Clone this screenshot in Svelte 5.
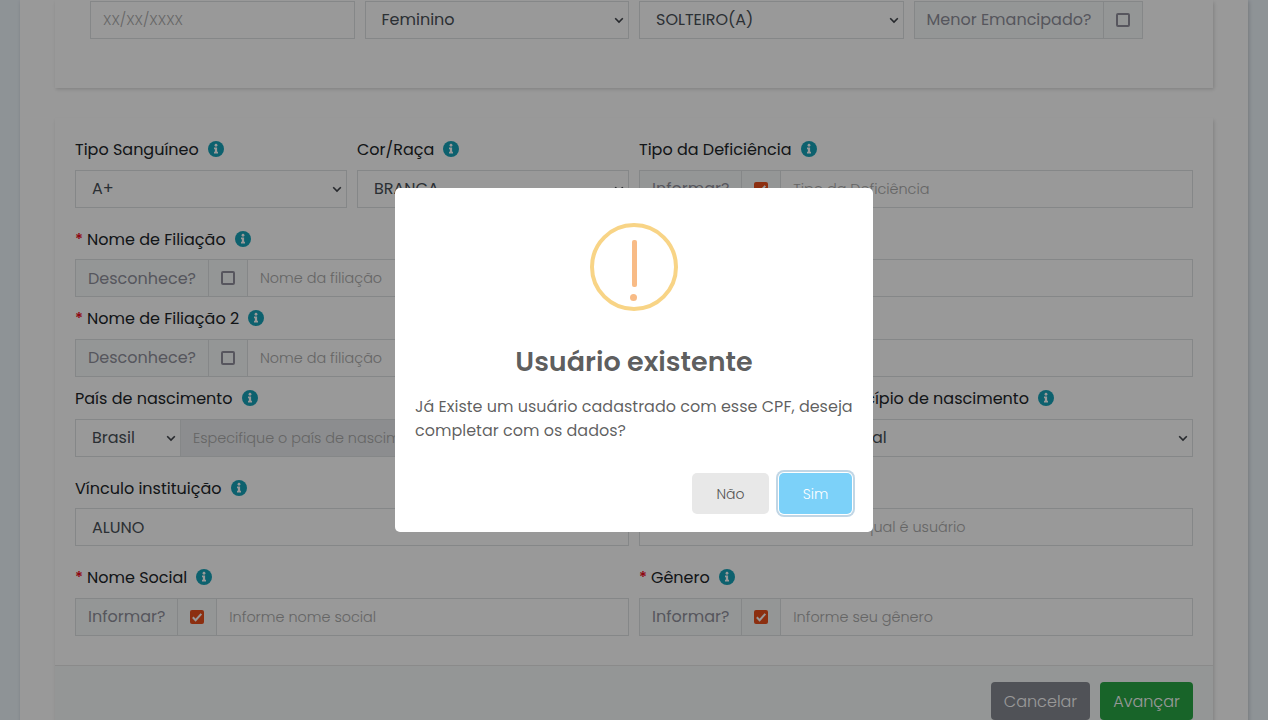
{#snippet info()}
  <svg class="info" viewBox="0 0 16 16" width="16" height="16">
    <circle cx="8" cy="8" r="8" fill="#17a2b8" />
    <circle cx="8" cy="4.25" r="1.4" fill="#fff" />
    <path d="M6 6.6h3.1v4.2h.9v1.6H6v-1.6h.9V8.2H6z" fill="#fff" />
  </svg>
{/snippet}

{#snippet label(text, required)}
  <div class="label">
    {#if required}<span class="star">*</span>{/if}
    <span class="t">{text}</span>
    {@render info()}
  </div>
{/snippet}

{#snippet select(text, arrow = true)}
  <div class="field select">
    {#if text}<span class="t">{text}</span>{/if}
    {#if arrow}
      <svg class="arrow" viewBox="0 0 10 7" width="10" height="7"><path d="M1.2 1.2 5 5l3.8-3.8" fill="none" stroke="#41454c" stroke-width="1.6" /></svg>
    {/if}
  </div>
{/snippet}

{#snippet check(text, checked)}
  <div class="addon"><span class="t">{text}</span></div>
  <div class="addon tick">
    {#if checked}
      <svg viewBox="0 0 14 14" width="14" height="14"><rect width="14" height="14" rx="2" fill="#ea4f1c" /><path d="M2.8 7.3 5.6 10.2 11.3 3.8" fill="none" stroke="#fff" stroke-width="2" /></svg>
    {:else}
      <span class="box"></span>
    {/if}
  </div>
{/snippet}

{#snippet input(text)}
  <div class="field input"><span class="t">{text}</span></div>
{/snippet}

<div class="page">
  <main>
    <section class="card first">
      <div class="grid four">
        {@render input('XX/XX/XXXX')}
        {@render select('Feminino')}
        {@render select('SOLTEIRO(A)')}
        <div class="group">{@render check('Menor Emancipado?', false)}</div>
      </div>
    </section>

    <section class="card second">
      <div class="grid blood wide">
        <div>{@render label('Tipo Sanguíneo')}{@render select('A+')}</div>
        <div>{@render label('Cor/Raça')}{@render select('BRANCA')}</div>
        <div>
          {@render label('Tipo da Deficiência')}
          <div class="group">{@render check('Informar?', true)}{@render input('Tipo da Deficiência')}</div>
        </div>
      </div>
      <div class="grid low">
        <div>
          {@render label('Nome de Filiação', true)}
          <div class="group">{@render check('Desconhece?', false)}{@render input('Nome da filiação')}</div>
        </div>
      </div>
      <div class="grid">
        <div>
          {@render label('Nome de Filiação 2', true)}
          <div class="group">{@render check('Desconhece?', false)}{@render input('Nome da filiação')}</div>
        </div>
      </div>
      <div class="grid three wide">
        <div>
          {@render label('País de nascimento')}
          <div class="group country">{@render select('Brasil')}{@render input('Especifique o país de nascimento')}</div>
        </div>
        <div class="bottom">{@render select('')}</div>
        <div>{@render label('Município de nascimento')}{@render select('Natal')}</div>
      </div>
      <div class="grid two link low">
        <div>{@render label('Vínculo instituição')}{@render select('ALUNO', false)}</div>
        <div class="bottom institution">{@render input('Informe a unidade da qual é usuário')}</div>
      </div>
      <div class="grid two last">
        <div>
          {@render label('Nome Social', true)}
          <div class="group">{@render check('Informar?', true)}{@render input('Informe nome social')}</div>
        </div>
        <div>
          {@render label('Gênero', true)}
          <div class="group">{@render check('Informar?', true)}{@render input('Informe seu gênero')}</div>
        </div>
      </div>
      <footer>
        <button class="cancel"><span class="t">Cancelar</span></button>
        <button class="next"><span class="t">Avançar</span></button>
      </footer>
    </section>
  </main>

  <div class="overlay">
    <div class="modal">
      <svg class="warn" viewBox="0 0 88 88" width="88" height="88">
        <circle cx="44" cy="44" r="42" fill="none" stroke="#f8d486" stroke-width="4" />
        <rect x="42" y="17" width="5" height="47" rx="2" fill="#f8bb86" />
        <circle cx="43.5" cy="74.5" r="3.5" fill="#f8bb86" />
      </svg>
      <h2>Usuário existente</h2>
      <p>Já Existe um usuário cadastrado com esse CPF, deseja completar com os dados?</p>
      <div class="actions">
        <button class="no">Não</button>
        <button class="yes">Sim</button>
      </div>
    </div>
  </div>
</div>

<style>
  :global(body) { background: #fff; overflow: hidden; }
  .page {
    position: relative;
    width: 1268px;
    height: 720px;
    overflow: hidden;
    box-sizing: border-box;
    padding: 0 20px;
    background: #edf5fb;
    font: 16px/24px Poppins, Inter, sans-serif;
    color: #212529;
  }
  .page :global(*) { box-sizing: border-box; }
  main {
    height: 760px;
    padding: 0 35px;
    background: #fff;
    box-shadow: 1px 1px 4px rgba(0, 0, 0, .18);
  }
  .t { white-space: nowrap; }
  .card { background: #fff; box-shadow: 1px 1.5px 3.5px rgba(0, 0, 0, .16); }
  .first { height: 88px; padding: 1px 35px 0; margin-bottom: 30px; }
  .second { padding-top: 20px; }
  .grid { display: grid; column-gap: 10px; margin: 0 20px 10px; }
  .wide { margin-bottom: 19px; }
  .link { margin-bottom: 20px; }
  .four { grid-template-columns: repeat(4, 1fr); margin: 0; }
  .blood { grid-template-columns: 272px 272px 1fr; }
  .three { grid-template-columns: repeat(3, 1fr); }
  .two { grid-template-columns: 1fr 1fr; }
  .last { margin-bottom: 29px; }
  .grid > div { min-width: 0; }
  .bottom { padding-top: 32px; }
  .label { display: flex; height: 32px; }
  .star { width: 12px; color: #f00a1c; font-weight: 500; }
  .info { margin: 3px 0 0 9.15px; }
  .field {
    display: flex;
    align-items: center;
    height: 38px;
    border: 1px solid #dee2e3;
    background: #fff;
    overflow: hidden;
  }
  .select { justify-content: space-between; padding: 0 4px 0 16px; color: #495057; }
  .arrow { margin: 1.5px 0 0 auto; flex: none; }
  .input { padding: 0 12px; font-size: 14.4px; font-weight: 300; color: #a9a9a9; }
  .institution .t { width: 313.5px; text-align: right; }
  .group { display: flex; }
  .group .input { flex: 1; min-width: 0; }
  .addon {
    display: flex;
    align-items: center;
    height: 38px;
    padding: 0 12px;
    border: 1px solid #dee2e3;
    border-right: 0;
    background: #f7fbfa;
    color: #8f8f9b;
  }
  .low .label { padding-top: 1px; }
  .low .addon:not(.tick), .low .select { padding-top: 2px; }
  .tick { width: 39px; padding: 0 12px; }
  .tick:last-child { width: 40px; border-right: 1px solid #dee2e3; }
  .box { width: 14px; height: 14px; border: 2px solid #918f9d; border-radius: 2px; }
  .country .select { width: 105px; border-right: 0; }
  .country .input { background: #e9ecef; }
  footer {
    display: flex;
    justify-content: flex-end;
    gap: 10px;
    height: 95px;
    padding: 16px 20px;
    border-top: 1px solid #e7e7e7;
    background: #f7fbfa;
  }
  button {
    display: flex;
    align-items: center;
    justify-content: center;
    border: 0;
    padding: 0;
    font: inherit;
    font-weight: 300;
    color: #fff;
  }
  footer button { height: 38px; padding-top: 2px; border-radius: 4px; }
  .cancel { width: 99px; background: #868991; }
  .next { width: 93px; background: #28a745; }
  .overlay {
    position: absolute;
    inset: 0;
    display: flex;
    align-items: center;
    justify-content: center;
    background: rgba(0, 0, 0, .4);
  }
  .modal {
    width: 478px;
    height: 344px;
    padding: 35px 20px 0;
    border-radius: 5px;
    background: #fff;
  }
  .warn { display: block; margin: 0 auto; }
  h2 {
    margin: 31px 0 0;
    text-align: center;
    font-size: 27px;
    line-height: 40px;
    font-weight: 600;
    color: rgba(0, 0, 0, .65);
  }
  p { margin: 13px 0 0; color: rgba(0, 0, 0, .64); }
  .actions { display: flex; justify-content: flex-end; gap: 10px; margin-top: 30px; padding-right: 1px; }
  .actions button { height: 41px; border-radius: 5px; font-size: 14px; }
  .actions .no { width: 77px; background: #e8e8e8; color: #555; }
  .yes { width: 73px; background: #7cd1f9; box-shadow: 0 0 0 1px #fff, 0 0 0 3px rgba(43, 114, 165, .29); }
</style>
